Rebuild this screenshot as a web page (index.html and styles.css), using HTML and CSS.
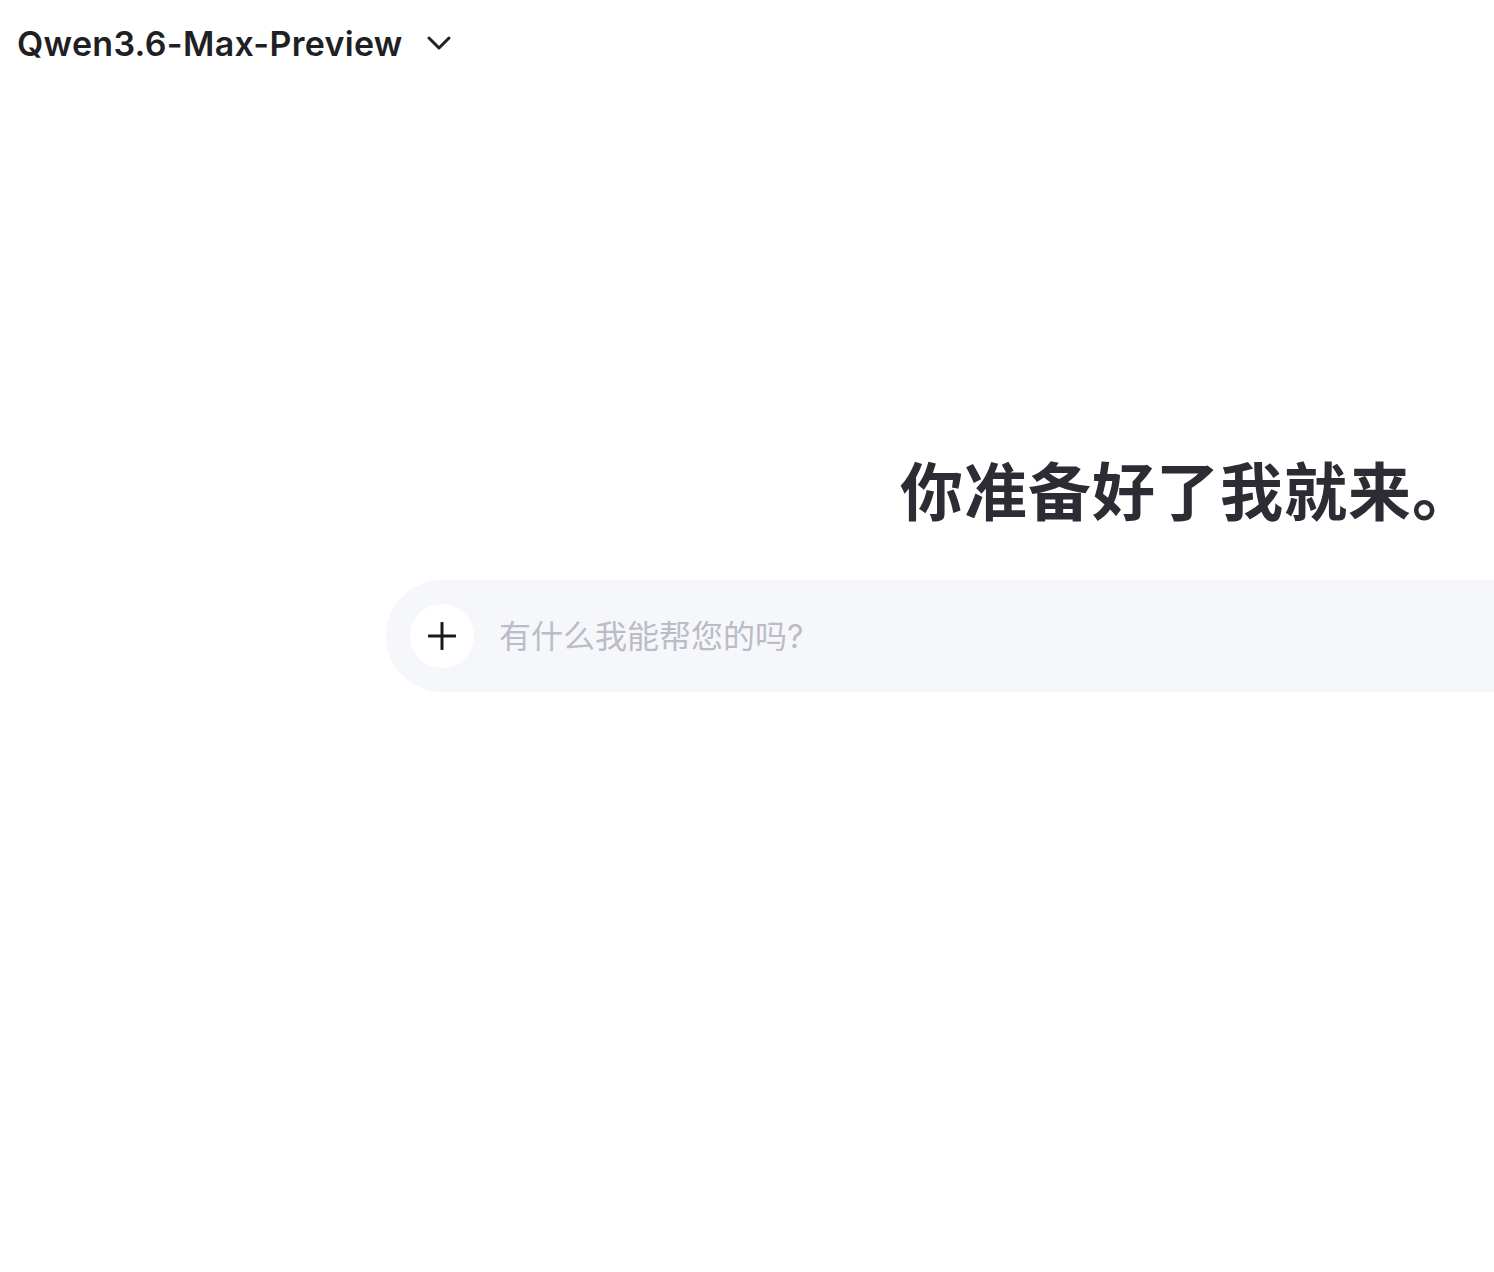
FILE: index.html
```html
<!DOCTYPE html>
<html>
<head>
<title>Qwen Chat</title>
<link rel="stylesheet" href="styles.css">
</head>
<body>

<div class="topbar">
    <div class="model-select">
        <span class="model-name">Qwen3.6-Max-Preview</span>
        <svg class="chevron" width="24" height="14" viewBox="0 0 24 14" fill="none">
            <path d="M2 2l10 10L22 2" stroke="#1f1f24" stroke-width="3" stroke-linecap="round" stroke-linejoin="round"/>
        </svg>
    </div>
</div>

<div class="main">
    <div class="chat-start">
        <h1 class="greeting">你准备好了我就来。</h1>
        <div class="composer">
            <button class="add-btn">
                <svg width="28" height="28" viewBox="0 0 28 28" fill="none">
                    <path d="M14 1v26M1 14h26" stroke="#1a1a1e" stroke-width="3" stroke-linecap="round"/>
                </svg>
            </button>
            <input class="prompt" type="text" placeholder="有什么我能帮您的吗?">
        </div>
    </div>
</div>

</body>
</html>
```

FILE: styles.css
```css
html, body {
    margin: 0;
    background-color: #fff;
    overflow: hidden;
}
body {
    font-family: Inter, "Noto Sans CJK SC", sans-serif;
    width: 1494px;
    height: 1272px;
}
.topbar {
    height: 86px;
    padding: 0 17px;
    display: flex;
    align-items: center;
}
.model-select {
    display: flex;
    align-items: center;
    gap: 24px;
    cursor: pointer;
}
.model-name {
    font-size: 34px;
    font-weight: 600;
    color: #1f1f24;
    letter-spacing: 0.3px;
}
.main {
    padding-top: 359px;
    padding-left: 386px;
}
.chat-start {
    width: 1604px;
    display: flex;
    flex-direction: column;
}
.greeting {
    margin: 0 0 49px;
    text-align: center;
    font-family: "Noto Sans CJK SC", sans-serif;
    font-size: 63px;
    font-weight: 700;
    line-height: 86px;
    letter-spacing: 1px;
    color: #2c2c34;
}
.composer {
    height: 112px;
    border-radius: 56px;
    background-color: #f6f7fb;
    display: flex;
    align-items: center;
    padding-left: 24px;
    gap: 25px;
}
.add-btn {
    width: 64px;
    height: 64px;
    border: none;
    border-radius: 50%;
    background-color: #fff;
    display: flex;
    align-items: center;
    justify-content: center;
    padding: 0;
    cursor: pointer;
}
.prompt {
    flex: 1;
    border: none;
    outline: none;
    background: transparent;
    font-family: Inter, "Noto Sans CJK SC", sans-serif;
    font-size: 32px;
    color: #1f1f24;
    padding: 0;
}
.prompt::placeholder {
    color: #bbbcc6;
}
```
